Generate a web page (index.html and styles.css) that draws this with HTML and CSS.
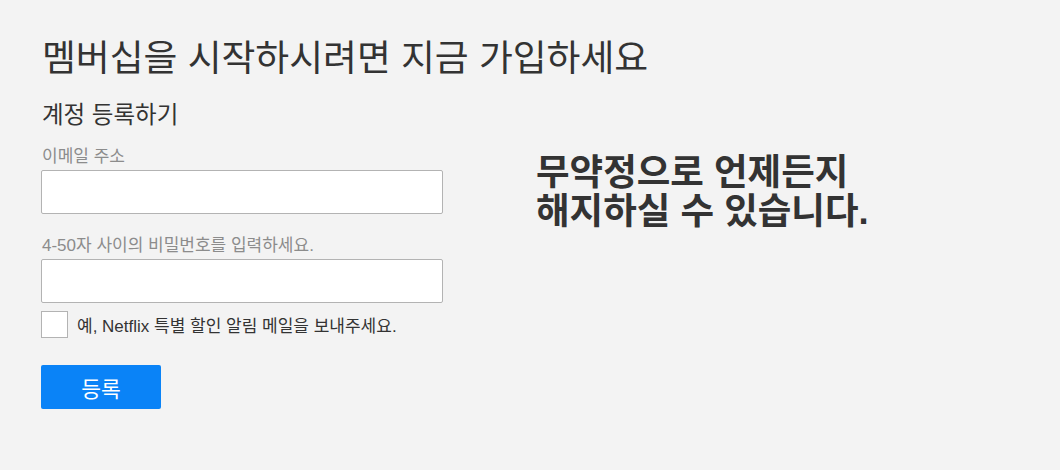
FILE: index.html
```html
<!DOCTYPE html>
<html lang="ko">
<head>
<meta charset="utf-8">
<title>가입</title>
<link rel="stylesheet" href="styles.css">
</head>
<body>
<div class="page">
  <h1 class="title">멤버십을 시작하시려면 지금 가입하세요</h1>
  <div class="content">
    <form class="form">
      <h2 class="subtitle">계정 등록하기</h2>
      <label class="label">이메일 주소</label>
      <input class="input" type="email">
      <label class="label label-pw">4-50자 사이의 비밀번호를 입력하세요.</label>
      <input class="input" type="password">
      <div class="check-row">
        <span class="checkbox"></span>
        <span class="check-text">예, Netflix 특별 할인 알림 메일을 보내주세요.</span>
      </div>
      <button class="btn" type="button">등록</button>
    </form>
    <div class="promo">무약정으로 언제든지<br>해지하실 수 있습니다.</div>
  </div>
</div>
</body>
</html>
```
FILE: styles.css
```css
html, body {
  margin: 0;
  padding: 0;
  background: #f3f3f3;
}
body {
  font-family: "Liberation Sans", "Noto Sans CJK KR", sans-serif;
  color: #333;
}
.page {
  padding: 34px 0 0 41px;
}
.title {
  margin: 0;
  font-size: 36.8px;
  font-weight: 400;
  line-height: 50px;
  color: #333;
  padding-left: 1px;
}
.content {
  display: flex;
  align-items: flex-start;
  gap: 93px;
}
.form {
  width: 402px;
  display: flex;
  flex-direction: column;
  align-items: flex-start;
}
.subtitle {
  margin: 16px 0 0 1px;
  font-size: 23.5px;
  font-weight: 400;
  line-height: 30px;
  color: #333;
}
.label {
  margin: 17px 0 0 1px;
  font-size: 17px;
  line-height: 20px;
  color: #8c8c8c;
}
.label-pw {
  margin-top: 22px;
}
.input {
  box-sizing: border-box;
  width: 402px;
  height: 44px;
  margin: 3px 0 0 0;
  border: 1px solid #b3b3b3;
  border-radius: 2px;
  background: #fff;
}
.check-row {
  display: flex;
  align-items: center;
  margin-top: 8px;
  gap: 9px;
}
.checkbox {
  box-sizing: border-box;
  width: 27px;
  height: 27px;
  border: 1px solid #b3b3b3;
  background: #fff;
}
.check-text {
  font-size: 17px;
  color: #333;
}
.btn {
  margin-top: 27px;
  width: 120px;
  height: 44px;
  border: 0;
  border-radius: 2px;
  background: #0a83f7;
  color: #fff;
  font-family: "Noto Sans CJK KR", sans-serif;
  font-size: 21.5px;
}
.promo {
  margin-top: 70px;
  font-size: 36.5px;
  font-weight: 700;
  line-height: 38.5px;
  color: #333;
}
```
